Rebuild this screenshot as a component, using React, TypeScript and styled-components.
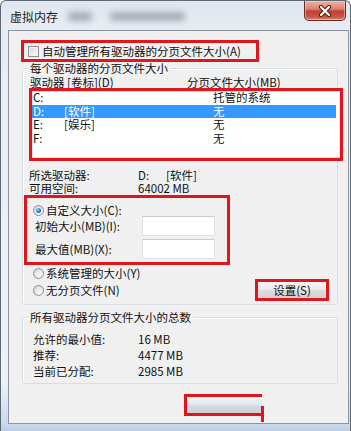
import React from 'react';
import styled, { createGlobalStyle } from 'styled-components';

const RED = '#e0161d';
const FONT = `"Noto Sans CJK SC", "Noto Sans", sans-serif`;

const Global = createGlobalStyle`
  html, body { margin: 0; padding: 0; background: #ffffff; }
  * { box-sizing: border-box; }
`;

const Window = styled.div`
  position: relative;
  width: 351px;
  height: 431px;
  overflow: hidden;
  display: flex;
  flex-direction: column;
  border: 1px solid #5d6873;
  border-bottom: none;
  border-radius: 6px 6px 0 0;
  background: linear-gradient(
    to bottom,
    #dfe6ee 0px,
    #e8edf2 30px,
    #eef2f6 380px,
    #c9d9ea 424px,
    #b7cbe1 431px
  );
  font-family: ${FONT};
  font-size: 11.5px;
  color: #111;
`;

const TitleBar = styled.div`
  height: 29px;
  display: flex;
  align-items: flex-start;
  padding-left: 9px;
  flex-shrink: 0;
`;

const Title = styled.div`
  margin-top: 9px;
  line-height: 14px;
  font-size: 12px;
  color: #1b1b1b;
`;

const Blob = styled.span<{ $w: number; $ml: number }>`
  display: block;
  margin-top: 11px;
  margin-left: ${(p) => p.$ml}px;
  width: ${(p) => p.$w}px;
  height: 9px;
  border-radius: 4px;
  background: rgba(90, 98, 108, 0.45);
  filter: blur(3px);
`;

const CloseButton = styled.div`
  margin-left: auto;
  margin-right: 4px;
  width: 42px;
  height: 20px;
  border: 1px solid #6e2a22;
  border-top: none;
  border-radius: 0 0 5px 5px;
  background: linear-gradient(
    to bottom,
    #eab1a5 0%,
    #d98776 40%,
    #c2402e 55%,
    #c85a48 85%,
    #dc8a78 100%
  );
  display: flex;
  align-items: center;
  justify-content: center;
  box-shadow: inset 0 0 0 1px rgba(255, 220, 210, 0.5);
`;

const Client = styled.div`
  margin-left: 7px;
  width: 341px;
  height: 394px;
  flex-shrink: 0;
  background: #f0f0f0;
  border: 1px solid #8b96a2;
  display: flex;
  flex-direction: column;
  align-items: flex-start;
`;

const RedBox = styled.div<{ $w: number; $h: number; $ml?: number; $mt?: number }>`
  width: ${(p) => p.$w}px;
  height: ${(p) => p.$h}px;
  margin-left: ${(p) => p.$ml ?? 0}px;
  margin-top: ${(p) => p.$mt ?? 0}px;
  border: 3px solid ${RED};
  flex-shrink: 0;
`;

const CheckRow = styled(RedBox)`
  display: flex;
  align-items: center;
  padding-left: 4px;
  gap: 3px;
  line-height: 13px;
`;

const CheckBox = styled.span`
  width: 11px;
  height: 11px;
  border: 1px solid #8e8f8f;
  background: linear-gradient(135deg, #d6d8db 0%, #eceef0 60%, #fbfbfb 100%);
  box-shadow: inset 0 0 0 1px #f4f4f4;
  flex-shrink: 0;
`;

const Group = styled.div<{ $mt: number }>`
  margin-left: 13px;
  margin-top: ${(p) => p.$mt}px;
  width: 316px;
  border: 1px solid #d5dfe5;
  border-radius: 3px;
  box-shadow: inset 1px 1px 0 #ffffff;
  display: flex;
  flex-direction: column;
  align-items: flex-start;
  flex-shrink: 0;
`;

const Legend = styled.div`
  margin: -7px 0 0 5px;
  padding: 0 2px;
  height: 13px;
  line-height: 13px;
  background: #f0f0f0;
  white-space: nowrap;
`;

const ListHeader = styled.div`
  margin-top: 1px;
  height: 12px;
  line-height: 12px;
  padding-left: 7px;
  display: flex;
  white-space: nowrap;
`;

const HeaderCol = styled.span<{ $w?: number }>`
  display: block;
  width: ${(p) => (p.$w ? `${p.$w}px` : 'auto')};
  flex-shrink: 0;
`;

const ListFrame = styled(RedBox)``;

const ListBox = styled.div`
  width: 100%;
  height: 100%;
  background: #ffffff;
  box-shadow: inset 0 0 0 1px #dde2e8;
  display: flex;
  flex-direction: column;
`;

const ListRow = styled.div<{ $selected?: boolean }>`
  height: 13.5px;
  line-height: 13.5px;
  margin-right: 4px;
  padding-left: 1px;
  display: flex;
  white-space: nowrap;
  background: ${(p) => (p.$selected ? '#3399ff' : 'transparent')};
  color: ${(p) => (p.$selected ? '#ffffff' : '#111111')};
`;

const Cell = styled.span<{ $w?: number }>`
  display: block;
  width: ${(p) => (p.$w ? `${p.$w}px` : 'auto')};
  flex-shrink: 0;
`;

const InfoRow = styled.div<{ $mt?: number }>`
  margin-top: ${(p) => p.$mt ?? 0}px;
  height: 13px;
  line-height: 13px;
  padding-left: 6px;
  display: flex;
  white-space: nowrap;
`;

const InfoLabel = styled.span<{ $w: number }>`
  display: block;
  width: ${(p) => p.$w}px;
  flex-shrink: 0;
`;

const Tag = styled.span`
  margin-left: 17px;
`;

const CustomBox = styled(RedBox)`
  display: flex;
  flex-direction: column;
  padding-top: 7px;
`;

const RadioRow = styled.div<{ $indent: number; $h: number; $mt?: number }>`
  height: ${(p) => p.$h}px;
  margin-top: ${(p) => p.$mt ?? 0}px;
  padding-left: ${(p) => p.$indent}px;
  display: flex;
  align-items: center;
  gap: 2px;
  line-height: 13px;
  white-space: nowrap;
  align-self: stretch;
`;

const Radio = styled.span<{ $checked?: boolean }>`
  position: relative;
  width: 11px;
  height: 11px;
  border-radius: 50%;
  border: 1px solid #8e8f8f;
  background: radial-gradient(circle at 65% 70%, #fdfdfd 0%, #e6e6e6 50%, #cfd0d2 100%);
  flex-shrink: 0;
  display: flex;
  align-items: center;
  justify-content: center;
  &::after {
    content: '';
    display: ${(p) => (p.$checked ? 'block' : 'none')};
    width: 5px;
    height: 5px;
    border-radius: 50%;
    background: radial-gradient(circle at 35% 35%, #8fd0ff 0%, #2a7ad0 55%, #17427a 100%);
  }
`;

const SizeRow = styled.div<{ $mt?: number }>`
  height: 20px;
  margin-top: ${(p) => p.$mt ?? 0}px;
  padding-left: 8px;
  display: flex;
  align-items: center;
  white-space: nowrap;
`;

const TextInput = styled.div`
  width: 73px;
  height: 20px;
  background: #ffffff;
  border: 1px solid #dfe2e6;
  border-top-color: #c9cdd2;
  flex-shrink: 0;
`;

const SetButtonFrame = styled(RedBox)`
  margin-left: auto;
  margin-right: 8px;
`;

const ButtonFace = styled.div`
  width: 100%;
  height: 100%;
  display: flex;
  align-items: center;
  justify-content: center;
  line-height: 13px;
  background: linear-gradient(to bottom, #f6f6f6 0%, #ebebeb 48%, #dcdcdc 52%, #d2d2d2 100%);
`;

const TotRow = styled.div<{ $mt?: number }>`
  margin-top: ${(p) => p.$mt ?? 0}px;
  height: 16px;
  line-height: 16px;
  padding-left: 10px;
  display: flex;
  white-space: nowrap;
`;

const BottomFrame = styled.div`
  position: relative;
  margin-left: 175px;
  margin-top: 10px;
  width: 78px;
  height: 22px;
  border: 3px solid ${RED};
  border-right: none;
  flex-shrink: 0;
  &::after {
    content: '';
    position: absolute;
    top: 9px;
    right: -2px;
    width: 3px;
    height: 16px;
    background: ${RED};
  }
`;

const BottomFace = styled.div`
  width: 100%;
  height: 100%;
  background: linear-gradient(to bottom, #f3f5f8 0%, #e4e8ed 45%, #d3dae2 55%, #c9d1da 100%);
`;

const CloseGlyph = () => (
  <svg width="14" height="12" viewBox="0 0 14 12">
    <path d="M3 2 L11 10 M11 2 L3 10" stroke="#4a1d16" strokeWidth="4.2" strokeLinecap="round" fill="none" />
    <path d="M3 2 L11 10 M11 2 L3 10" stroke="#ffffff" strokeWidth="2.2" strokeLinecap="round" fill="none" />
  </svg>
);

const drives = [
  { d: 'C:', label: '', size: '托管的系统', selected: false },
  { d: 'D:', label: '[软件]', size: '无', selected: true },
  { d: 'E:', label: '[娱乐]', size: '无', selected: false },
  { d: 'F:', label: '', size: '无', selected: false },
];

const totals = [
  { k: '允许的最小值:', v: '16 MB' },
  { k: '推荐:', v: '4477 MB' },
  { k: '当前已分配:', v: '2985 MB' },
];

export default function App() {
  return (
    <>
      <Global />
      <Window>
        <TitleBar>
          <Title>虚拟内存</Title>
          <Blob $ml={10} $w={24} />
          <Blob $ml={18} $w={75} />
          <CloseButton>
            <CloseGlyph />
          </CloseButton>
        </TitleBar>
        <Client>
          <CheckRow $w={238} $h={22} $ml={12} $mt={9}>
            <CheckBox />
            <span>自动管理所有驱动器的分页文件大小(A)</span>
          </CheckRow>

          <Group $mt={6}>
            <Legend>每个驱动器的分页文件大小</Legend>
            <ListHeader>
              <HeaderCol $w={157}>驱动器 [卷标](D)</HeaderCol>
              <HeaderCol>分页文件大小(MB)</HeaderCol>
            </ListHeader>
            <ListFrame $w={314} $h={73} $ml={6}>
              <ListBox>
                {drives.map((r) => (
                  <ListRow key={r.d} $selected={r.selected}>
                    <Cell $w={31}>{r.d}</Cell>
                    <Cell $w={149}>{r.label}</Cell>
                    <Cell>{r.size}</Cell>
                  </ListRow>
                ))}
              </ListBox>
            </ListFrame>
            <InfoRow $mt={8}>
              <InfoLabel $w={109}>所选驱动器:</InfoLabel>
              <span>
                D:<Tag>[软件]</Tag>
              </span>
            </InfoRow>
            <InfoRow>
              <InfoLabel $w={109}>可用空间:</InfoLabel>
              <span>64002 MB</span>
            </InfoRow>
            <CustomBox $w={206} $h={70} $ml={1}>
              <RadioRow $indent={6} $h={11}>
                <Radio $checked />
                <span>自定义大小(C):</span>
              </RadioRow>
              <SizeRow>
                <InfoLabel $w={107}>初始大小(MB)(I):</InfoLabel>
                <TextInput />
              </SizeRow>
              <SizeRow $mt={3}>
                <InfoLabel $w={107}>最大值(MB)(X):</InfoLabel>
                <TextInput />
              </SizeRow>
            </CustomBox>
            <RadioRow $indent={10} $h={12} $mt={2}>
              <Radio />
              <span>系统管理的大小(Y)</span>
            </RadioRow>
            <RadioRow $indent={10} $h={22}>
              <Radio />
              <span>无分页文件(N)</span>
              <SetButtonFrame $w={74} $h={22}>
                <ButtonFace>设置(S)</ButtonFace>
              </SetButtonFrame>
            </RadioRow>
            <div style={{ height: 3 }} />
          </Group>

          <Group $mt={12}>
            <Legend>所有驱动器分页文件大小的总数</Legend>
            {totals.map((t, i) => (
              <TotRow key={t.k} $mt={i === 0 ? 7 : 0}>
                <InfoLabel $w={105}>{t.k}</InfoLabel>
                <span>{t.v}</span>
              </TotRow>
            ))}
            <div style={{ height: 4 }} />
          </Group>

          <BottomFrame>
            <BottomFace />
          </BottomFrame>
        </Client>
      </Window>
    </>
  );
}
